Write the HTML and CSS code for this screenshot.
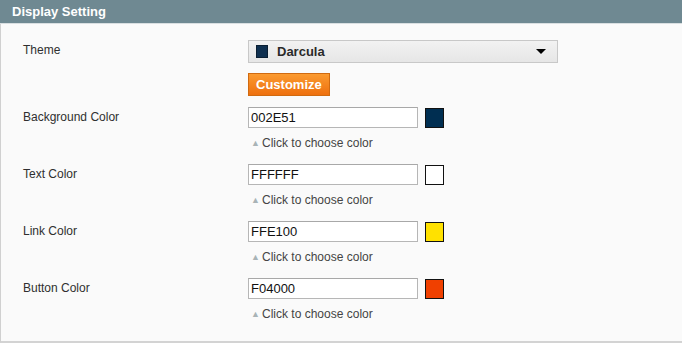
FILE: index.html
```html
<!DOCTYPE html>
<html lang="en">
<head>
  <meta charset="UTF-8">
  <title>Display Setting</title>
  <link rel="stylesheet" href="styles.css">
</head>
<body>
  <div class="section">
    <div class="section-head">Display Setting</div>
    <div class="section-body">
      <div class="row row-theme">
        <div class="label">Theme</div>
        <div class="value">
          <div class="select">
            <span class="select-swatch"></span>
            <span class="select-text">Darcula</span>
            <span class="select-arrow"></span>
          </div>
          <button class="customize">Customize</button>
        </div>
      </div>

      <div class="row">
        <div class="label">Background Color</div>
        <div class="value">
          <div class="color-line">
            <input class="color-input" type="text" value="002E51">
            <span class="swatch swatch-bg"></span>
          </div>
          <div class="hint"><span class="hint-arrow">&#9650;</span>Click to choose color</div>
        </div>
      </div>

      <div class="row">
        <div class="label">Text Color</div>
        <div class="value">
          <div class="color-line">
            <input class="color-input" type="text" value="FFFFFF">
            <span class="swatch swatch-text"></span>
          </div>
          <div class="hint"><span class="hint-arrow">&#9650;</span>Click to choose color</div>
        </div>
      </div>

      <div class="row">
        <div class="label">Link Color</div>
        <div class="value">
          <div class="color-line">
            <input class="color-input" type="text" value="FFE100">
            <span class="swatch swatch-link"></span>
          </div>
          <div class="hint"><span class="hint-arrow">&#9650;</span>Click to choose color</div>
        </div>
      </div>

      <div class="row">
        <div class="label">Button Color</div>
        <div class="value">
          <div class="color-line">
            <input class="color-input" type="text" value="F04000">
            <span class="swatch swatch-button"></span>
          </div>
          <div class="hint"><span class="hint-arrow">&#9650;</span>Click to choose color</div>
        </div>
      </div>
    </div>
  </div>
</body>
</html>
```

FILE: styles.css
```css
/* General Styles */
body {
  margin: 0;
  background-color: #ffffff;
  font-family: "Liberation Sans", Arial, sans-serif;
  font-size: 12px;
  color: #2f2f2f;
}

.section {
  width: 682px;
}

.section-head {
  height: 23px;
  line-height: 23px;
  padding-left: 12px;
  background-color: #6f8992;
  border-bottom: 1px solid #d9dfe1;
  color: #ffffff;
  font-size: 13px;
  font-weight: bold;
}

.section-body {
  background-color: #fafafa;
  border-left: 1px solid #d0d0d0;
  border-bottom: 2px solid #d3d3d3;
  padding: 16px 0 19px 22px;
}

/* Rows */
.row {
  display: flex;
  margin-bottom: 13px;
}

.row-theme {
  margin-bottom: 11px;
}

.row:last-child {
  margin-bottom: 0;
}

.label {
  width: 225px;
  line-height: 21px;
}

.value {
  display: flex;
  flex-direction: column;
  align-items: flex-start;
}

/* Theme select */
.select {
  display: flex;
  align-items: center;
  width: 296px;
  height: 21px;
  padding: 0 5px 0 7px;
  border: 1px solid #c8c8c8;
  background: linear-gradient(#f2f2f2, #e6e6e6);
}

.select-swatch {
  width: 12px;
  height: 13px;
  background-color: #0f3050;
  border: 1px solid #0a1f33;
  box-sizing: border-box;
}

.select-text {
  flex: 1;
  margin-left: 9px;
  font-size: 13px;
  font-weight: bold;
  color: #2a2a2a;
}

.select-arrow {
  width: 0;
  height: 0;
  margin-right: 6px;
  border-left: 5px solid transparent;
  border-right: 5px solid transparent;
  border-top: 5px solid #000000;
}

.customize {
  margin-top: 10px;
  height: 23px;
  padding: 0 7px;
  border: 1px solid #d06a10;
  background: linear-gradient(#fb9a2f, #ee700f);
  color: #ffffff;
  font-family: "Liberation Sans", Arial, sans-serif;
  font-size: 13px;
  font-weight: bold;
  cursor: pointer;
}

/* Color rows */
.color-line {
  display: flex;
  align-items: center;
}

.color-input {
  width: 170px;
  height: 21px;
  box-sizing: border-box;
  margin: 0;
  padding: 0 2px;
  border: 1px solid #b6b6b6;
  border-top-color: #a8a8a8;
  background-color: #ffffff;
  font-family: "Liberation Sans", Arial, sans-serif;
  font-size: 13px;
  color: #111111;
}

.swatch {
  width: 19px;
  height: 20px;
  margin-left: 7px;
  box-sizing: border-box;
  border: 1px solid #111111;
}

.swatch-bg { background-color: #002e51; }
.swatch-text { background-color: #ffffff; }
.swatch-link { background-color: #ffe100; }
.swatch-button { background-color: #f04000; }

.hint {
  padding-top: 7px;
  line-height: 16px;
  color: #444444;
}

.hint-arrow {
  display: inline-block;
  width: 11px;
  padding-left: 3px;
  font-size: 9px;
  color: #a9b3b6;
  vertical-align: 1px;
}
```
